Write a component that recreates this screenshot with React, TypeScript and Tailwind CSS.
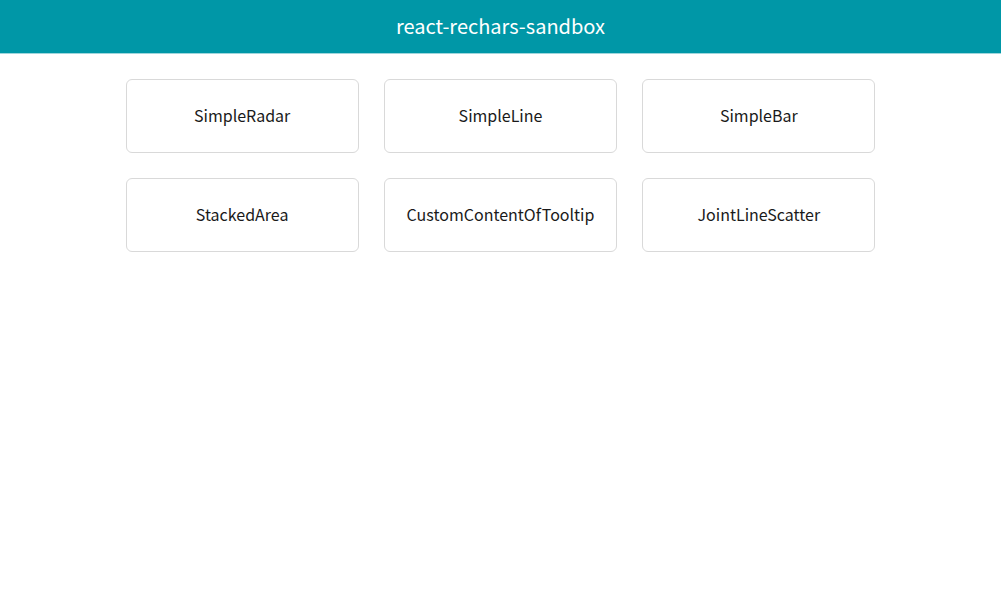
import React from "react";

const items = [
  "SimpleRadar",
  "SimpleLine",
  "SimpleBar",
  "StackedArea",
  "CustomContentOfTooltip",
  "JointLineScatter",
];

export default function App() {
  return (
    <div
      className="min-h-[600px] bg-white"
      style={{ fontFamily: '"Noto Sans CJK JP", "Noto Sans", sans-serif' }}
    >
      <header className="h-[54px] bg-[#0097a7] border-b border-[#9fd6dc] flex items-center justify-center pb-[2px]">
        <h1 className="text-white text-[20px] leading-none">react-rechars-sandbox</h1>
      </header>
      <main className="w-[750px] mx-auto mt-[25px] grid grid-cols-3 gap-[25px]">
        {items.map((name) => (
          <div
            key={name}
            className="h-[74px] border border-[#d9d9d9] rounded-[6px] flex items-center justify-center pb-[2px] text-[16px] leading-none text-[#1a1a1a]"
          >
            {name}
          </div>
        ))}
      </main>
    </div>
  );
}
